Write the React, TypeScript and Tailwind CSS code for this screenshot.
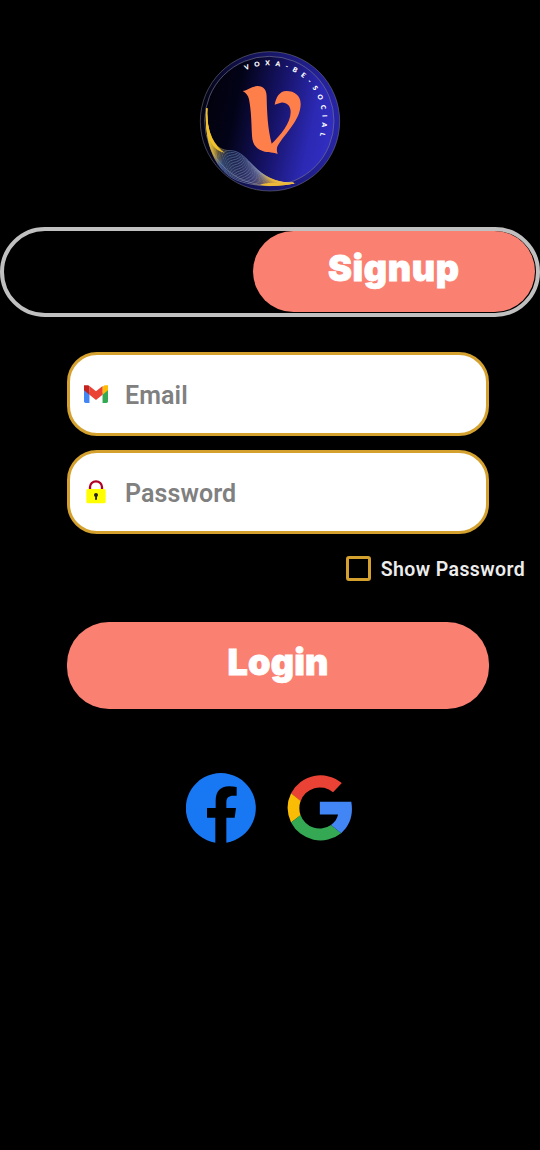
import React from "react";

// Interpolates between the upper and lower edge of the wave ribbon.
const upper = [50, 205, 50, 290, 74, 332, 120, 332, 182, 332, 190, 428, 310, 430];
const lower = [50, 205, 42, 310, 76, 400, 150, 424, 200, 440, 250, 440, 310, 430];
const waves = Array.from({ length: 19 }, (_, i) => {
  const t = i / 18;
  const p = upper.map((u, k) => (u + (lower[k] - u) * t).toFixed(1));
  return `M${p[0]} ${p[1]}C${p.slice(2, 8).join(" ")} ${p.slice(8).join(" ")}`;
});

function VoxaLogo() {
  return (
    <svg viewBox="0 0 480 480" className="size-40" role="img" aria-label="Voxa">
      <defs>
        <linearGradient id="disc" x1="0.04" y1="0.42" x2="0.96" y2="0.62">
          <stop offset="0" stopColor="#02020f" />
          <stop offset="0.2" stopColor="#030318" />
          <stop offset="0.55" stopColor="#17146b" />
          <stop offset="0.85" stopColor="#2c29b4" />
          <stop offset="1" stopColor="#302dc0" />
        </linearGradient>
        <linearGradient id="rim" x1="0" y1="0.5" x2="1" y2="0.5">
          <stop offset="0" stopColor="#03030f" />
          <stop offset="0.3" stopColor="#10104e" />
          <stop offset="1" stopColor="#2825a8" />
        </linearGradient>
        <linearGradient id="wave" gradientUnits="userSpaceOnUse" x1="45" y1="240" x2="310" y2="430">
          <stop offset="0" stopColor="#e9bf3a" />
          <stop offset="0.1" stopColor="#f0c12c" />
          <stop offset="0.26" stopColor="#d9b64a" />
          <stop offset="0.36" stopColor="#6d96d4" />
          <stop offset="0.68" stopColor="#97a3b8" />
          <stop offset="0.82" stopColor="#edb936" />
          <stop offset="1" stopColor="#e8c26a" />
        </linearGradient>
        <path id="ring" d="M167 91A162 162 0 1 1 235 400" />
      </defs>
      <circle cx="240" cy="244" r="209" fill="url(#rim)" stroke="#77778c" strokeWidth="1.6" />
      <circle cx="238" cy="243" r="194" fill="url(#disc)" stroke="#72728f" strokeWidth="2" />
      <g fill="none" stroke="url(#wave)" strokeWidth="1.7">
        {waves.map((d) => (
          <path key={d} d={d} />
        ))}
      </g>
      <path d="M48 215C46 280 60 330 104 338C74 318 54 280 48 215Z" fill="#f0c12c" />
      <path d="M210 434C240 424 262 430 318 429C280 438 240 441 210 434Z" fill="#edb936" />
      <path
        fill="#ff7f4b"
        d="M158 153C173 151 183 139 202 138C222 138 230 150 230 172C231 218 233 265 245 311C271 286 302 250 302 216C302 197 289 186 273 188C265 189 260 193 254 194C258 172 269 153 289 153C315 153 333 168 332 194C330 242 285 280 264 316C259 324 260 332 263 342C252 337 235 339 218 333C196 326 187 309 186 287C184 245 184 216 177 178C175 168 168 158 158 153Z"
      />
      <text fill="#fff" fontSize="20" fontWeight="800" fontFamily="Lato, sans-serif">
        <textPath href="#ring" textLength="374" lengthAdjust="spacing">
          VOXA-BE-SOCIAL
        </textPath>
      </text>
    </svg>
  );
}

function MailIcon() {
  return (
    <svg viewBox="52 42 88 66" className="h-[18px] w-6 shrink-0" aria-hidden="true">
      <path fill="#4285f4" d="M58 108h14V68L52 55v47c0 3.320 2.690 6 6 6" />
      <path fill="#34a853" d="M120 108h14c3.320 0 6-2.690 6-6V55l-20 15" />
      <path fill="#fbbc04" d="M120 48v30l20-17V43h-12z" />
      <path fill="#ea4335" d="M72 78V46l24 19 24-19v32L96 97" />
      <path fill="#c5221f" d="M52 43v18l20 17V46l-5-3z" />
    </svg>
  );
}

function LockIcon() {
  return (
    <svg viewBox="0 0 60 72" className="h-6 w-5 shrink-0" aria-hidden="true">
      <path d="M12 32V21a18 17 0 0 1 36 0v11" fill="none" stroke="#b00025" strokeWidth="7" />
      <rect x="1" y="27" width="58" height="43" rx="5" fill="#ffff00" />
      <circle cx="30" cy="45" r="6" fill="#26221c" />
      <path d="M28 45h5v14h-6z" fill="#26221c" />
    </svg>
  );
}

function FacebookIcon() {
  return (
    <svg viewBox="0 0 210 210" className="size-[70px]" aria-hidden="true">
      <path
        fill="#1877f2"
        d="M88 209A105 105 0 1 1 121 209V134H146L150 105H121V88C121 74 128 68 142 68H152V42C145 41 137 40 129 40C103 40 89 56 89 83V105H63V134H88Z"
      />
    </svg>
  );
}

function GoogleIcon() {
  return (
    <svg viewBox="2 2 192 195" className="h-[66px] w-[65px]" aria-hidden="true">
      <path fill="#ea4335" d="M14 56A98 98 0 0 1 164 26L138 53A60 60 0 0 0 42 80Z" />
      <path fill="#fbbc05" d="M14 56A99 99 0 0 0 14 142L42 121A66 66 0 0 1 42 79Z" />
      <path fill="#34a853" d="M14 142A98 98 0 0 0 162 174L132 150A60 60 0 0 1 42 120Z" />
      <path fill="#4285f4" d="M99 81H192C198 117 190 150 162 174L132 150C143 142 150 132 153 119H99Z" />
    </svg>
  );
}

function Field({ icon, label, type }: { icon: React.ReactNode; label: string; type: string }) {
  return (
    <label className="flex h-[84px] w-full items-center rounded-[30px] border-3 border-[#d4a12f] bg-white pl-3.5">
      <span className="flex w-6 justify-center">{icon}</span>
      <input
        type={type}
        placeholder={label}
        className="ml-[17px] min-w-0 flex-1 pt-1 font-[Roboto,sans-serif] text-[25px] font-semibold tracking-[0.1px] text-gray-900 outline-none placeholder:text-[#808080]"
      />
    </label>
  );
}

export default function App() {
  return (
    <main className="flex h-[1150px] w-[540px] flex-col overflow-hidden bg-black font-[Roboto,sans-serif]">
      <header className="flex justify-center pt-10">
        <VoxaLogo />
      </header>

      <div className="mt-[27px] flex h-[90px] w-full justify-end rounded-full border-4 border-[#c0c0c0] pr-[1.5px]">
        <button className="flex h-[81px] w-[281.500px] items-center justify-center rounded-full bg-[#fa8072] pb-2 font-[Inter,sans-serif] text-[36px] font-black tracking-[0.6px] text-white [-webkit-text-stroke:0.8px_white]">
          Signup
        </button>
      </div>

      <form className="ml-[67px] mt-[35px] flex w-[422px] flex-col">
        <div className="flex flex-col gap-3.5">
          <Field icon={<MailIcon />} label="Email" type="text" />
          <Field icon={<LockIcon />} label="Password" type="password" />
        </div>
        <label className="-mr-9 mt-5 flex h-7 items-center justify-end gap-2.5">
          <input
            type="checkbox"
            className="size-[25px] appearance-none rounded-[3px] border-3 border-[#d4a12f]"
          />
          <span className="whitespace-nowrap pt-1 text-[19.500px] font-semibold tracking-[0.38px] text-[#ececec]">
            Show Password
          </span>
        </label>
        <button
          type="button"
          className="mt-10 flex h-[87px] w-full items-center justify-center rounded-[42px] bg-[#fa8072] pb-2 font-[Inter,sans-serif] text-[36px] font-black tracking-[0.2px] text-white [-webkit-text-stroke:0.8px_white]"
        >
          Login
        </button>
      </form>

      <div className="ml-[186px] mt-16 flex items-center gap-[31px]">
        <button aria-label="Continue with Facebook">
          <FacebookIcon />
        </button>
        <button aria-label="Continue with Google">
          <GoogleIcon />
        </button>
      </div>
    </main>
  );
}
